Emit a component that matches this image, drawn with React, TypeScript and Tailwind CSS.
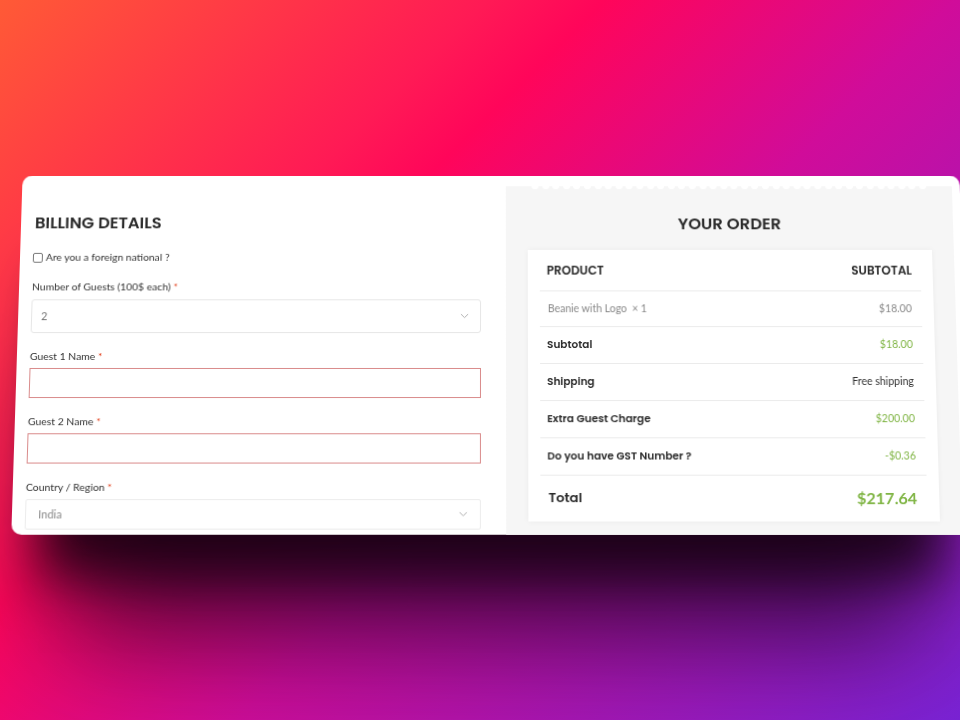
import React from 'react';

const heading = "font-['Poppins','Inter',sans-serif] font-semibold text-[#2b2b2b]";
const body = "font-['Lato','Liberation_Sans',sans-serif]";

function Chevron() {
  return (
    <svg width="9" height="6" viewBox="0 0 9 6" fill="none">
      <path d="M1.2 1.2l3.3 3.3 3.3-3.3" stroke="#b0b0b0" strokeWidth="1" strokeLinecap="round" strokeLinejoin="round" />
    </svg>
  );
}

function Label({ text }: { text: string }) {
  return (
    <div className={`${body} text-[10.4px] leading-[16px] text-[#333]`}>
      {text} <span className="text-[#e2401c]">*</span>
    </div>
  );
}

const rows = [
  { label: 'Subtotal', value: '$18.00', green: true },
  { label: 'Shipping', value: 'Free shipping', green: false },
  { label: 'Extra Guest Charge', value: '$200.00', green: true },
  { label: 'Do you have GST Number ?', value: '-$0.36', green: true },
];

export default function App() {
  return (
    <div className="w-[960px] h-[720px] overflow-hidden bg-[linear-gradient(135deg,#ff5a36_0%,#ff1a55_29%,#ff055a_36%,#d00c9a_57%,#7a22d6_100%)] pt-[173px] pl-[17px]">
      <div className="w-[948px] h-[360px] bg-white rounded-[10px] flex overflow-hidden [transform:perspective(1000px)_rotateX(3.8deg)] shadow-[0_70px_50px_-30px_rgba(20,0,15,0.85),0_150px_110px_-50px_rgba(25,0,30,0.7)]">
        {/* Billing details */}
        <div className="w-[489px] shrink-0 pl-[13px] pr-[25px] pt-[37px]">
          <h2 className={`${heading} text-[16.5px] leading-[24px] pl-[1px]`}>BILLING DETAILS</h2>

          <div className="mt-[15px] flex items-center h-[16px]">
            <span className="w-[10px] h-[10px] border border-[#767676] rounded-[2px] bg-white" />
            <span className={`${body} ml-[3px] text-[10.4px] text-[#333]`}>Are you a foreign national ?</span>
          </div>

          <div className="mt-[13px]">
            <Label text="Number of Guests (100$ each)" />
          </div>
          <div className="mt-[5px] h-[34px] border border-[#e6e6e6] rounded-[3px] flex items-center justify-between pl-[9px] pr-[11px]">
            <span className={`${body} text-[11px] text-[#777]`}>2</span>
            <Chevron />
          </div>

          <div className="mt-[15px]">
            <Label text="Guest 1 Name" />
          </div>
          <div className="mt-[4px] h-[30px] border border-[#d98b8b]" />

          <div className="mt-[15px]">
            <Label text="Guest 2 Name" />
          </div>
          <div className="mt-[4px] h-[30px] border border-[#d98b8b]" />

          <div className="mt-[15px]">
            <Label text="Country / Region" />
          </div>
          <div className="mt-[4px] h-[30px] border border-[#ececec] rounded-[2px] flex items-center justify-between pl-[12px] pr-[12px]">
            <span className={`${body} text-[11px] text-[#888]`}>India</span>
            <Chevron />
          </div>
        </div>

        {/* Your order */}
        <div className="w-[451px] shrink-0 mt-[11px] bg-[#f6f6f6] px-[22px] pt-[23px]">
          <div className="flex justify-between -mt-[26px] mb-[24px] px-[4px]">
            {Array.from({ length: 38 }).map((_, i) => (
              <span key={i} className="w-[7px] h-[6px] rounded-full bg-white" />
            ))}
          </div>
          <h2 className={`${heading} text-[16.5px] leading-[24px] text-center`}>YOUR ORDER</h2>

          <div className="mt-[14px] bg-white px-[12px] shadow-[0_0_6px_rgba(0,0,0,0.05)]">
            <div className="h-[42px] border-b border-[#ebebeb] flex items-center justify-between pl-[7px] pr-[9px]">
              <span className={`${heading} text-[12px]`}>PRODUCT</span>
              <span className={`${heading} text-[12px]`}>SUBTOTAL</span>
            </div>
            <div className="h-[36px] border-b border-[#ebebeb] flex items-center justify-between pl-[8px] pr-[10px]">
              <span className={`${body} text-[10.5px] text-[#888]`}>
                Beanie with Logo&nbsp; × 1
              </span>
              <span className={`${body} text-[10.5px] text-[#888]`}>$18.00</span>
            </div>
            {rows.map((r) => (
              <div
                key={r.label}
                className="h-[37px] border-b border-[#ebebeb] flex items-center justify-between pl-[7px] pr-[10px]"
              >
                <span className={`${heading} text-[10.5px]`}>{r.label}</span>
                <span className={`${body} text-[10.5px] ${r.green ? 'text-[#80b545]' : 'text-[#333]'}`}>
                  {r.value}
                </span>
              </div>
            ))}
            <div className="h-[45px] pb-[2px] flex items-center justify-between pl-[8px] pr-[10px]">
              <span className={`${heading} text-[13px]`}>Total</span>
              <span className={`${body} font-bold text-[16px] text-[#80b545]`}>$217.64</span>
            </div>
          </div>
        </div>
      </div>
    </div>
  );
}
